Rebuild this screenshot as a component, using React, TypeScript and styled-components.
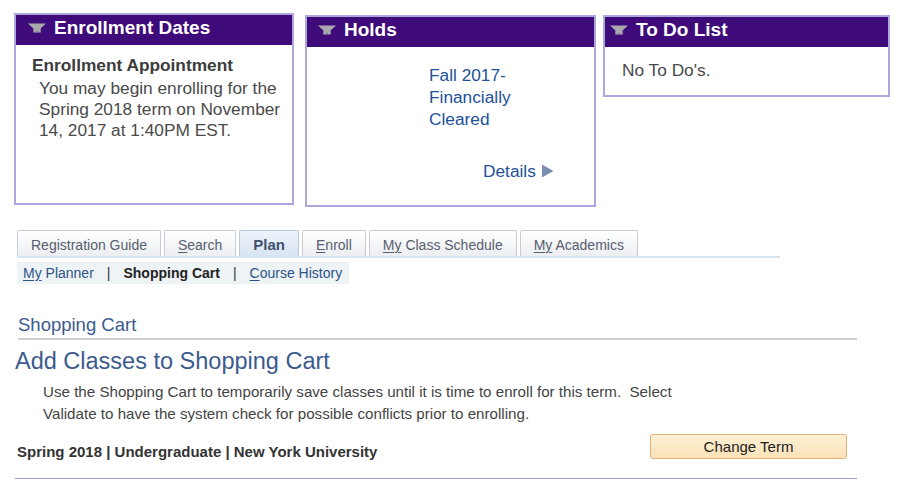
import styled, { createGlobalStyle } from 'styled-components';

const GlobalStyle = createGlobalStyle`
  body {
    margin: 0;
    background: #ffffff;
    font-family: "Liberation Sans", Arial, Helvetica, sans-serif;
  }
`;

const FunnelIcon = () => (
  <svg width='18' height='10' viewBox='0 0 18 10'>
    <path d='M0 0.5 H18 L12.6 5.6 L12.8 9.5 H5.2 L5.4 5.6 Z' fill='#a9a9ad' />
    <path d='M7.2 9.5 L9 7.6 L10.8 9.5 Z' fill='#7d6aa0' />
  </svg>
);

const tabs = [
  { label: 'Registration Guide', key: '', rest: 'Registration Guide' },
  { label: 'Search', key: 'S', rest: 'earch' },
  { label: 'Plan', key: '', rest: 'Plan', active: true },
  { label: 'Enroll', key: 'E', rest: 'nroll' },
  { label: 'My Class Schedule', key: 'My', rest: ' Class Schedule' },
  { label: 'My Academics', key: 'My', rest: ' Academics' },
];

const App = () => {
  return (
    <Page>
      <GlobalStyle />
      <TopRow>
        <Panel $top={13} $w={280} $h={192} $ml={0}>
          <PanelHeader $inset={12}>
            <FunnelIcon />
            <HeaderTitle>Enrollment Dates</HeaderTitle>
          </PanelHeader>
          <AppointmentBody>
            <BodyHeading>Enrollment Appointment</BodyHeading>
            <BodyText>
              You may begin enrolling for the Spring 2018 term on November 14,
              2017 at 1:40PM EST.
            </BodyText>
          </AppointmentBody>
        </Panel>

        <Panel $top={15} $w={291} $h={192} $ml={11}>
          <PanelHeader $inset={11}>
            <FunnelIcon />
            <HeaderTitle>Holds</HeaderTitle>
          </PanelHeader>
          <HoldsBody>
            <HoldLink>
              Fall 2017-
              <br />
              Financially
              <br />
              Cleared
            </HoldLink>
            <DetailsLink>
              Details
              <svg width='13' height='14' viewBox='0 0 13 14'>
                <path d='M1 0.5 L12.5 7 L1 13.5 Z' fill='#7b8fb3' />
              </svg>
            </DetailsLink>
          </HoldsBody>
        </Panel>

        <Panel $top={15} $w={287} $h={82} $ml={7}>
          <PanelHeader $inset={5}>
            <FunnelIcon />
            <HeaderTitle>To Do List</HeaderTitle>
          </PanelHeader>
          <TodoBody>No To Do's.</TodoBody>
        </Panel>
      </TopRow>

      <TabBar>
        {tabs.map((t) => (
          <Tab key={t.label} $active={!!t.active}>
            {t.key && <u>{t.key}</u>}
            {t.rest}
          </Tab>
        ))}
      </TabBar>

      <SubNav>
        <SubLink>
          <u>My</u> Planner
        </SubLink>
        <Pipe>|</Pipe>
        <SubCurrent>Shopping Cart</SubCurrent>
        <Pipe>|</Pipe>
        <SubLink>
          <u>C</u>ourse History
        </SubLink>
      </SubNav>

      <Content>
        <PageHeader>Shopping Cart</PageHeader>
        <Title>Add Classes to Shopping Cart</Title>
        <Instructions>
          Use the Shopping Cart to temporarily save classes until it is time to
          enroll for this term.&nbsp; Select
          <br />
          Validate to have the system check for possible conflicts prior to
          enrolling.
        </Instructions>
        <TermRow>
          <TermLabel>Spring 2018 | Undergraduate | New York University</TermLabel>
          <ChangeTermButton>Change Term</ChangeTermButton>
        </TermRow>
      </Content>
    </Page>
  );
};

export default App;

const Page = styled.div`
  width: 900px;
`;

const TopRow = styled.div`
  display: flex;
  align-items: flex-start;
  padding-left: 14px;
`;

const Panel = styled.section<{ $top: number; $w: number; $h: number; $ml: number }>`
  box-sizing: border-box;
  display: flex;
  flex-direction: column;
  margin-top: ${(p) => p.$top}px;
  margin-left: ${(p) => p.$ml}px;
  width: ${(p) => p.$w}px;
  height: ${(p) => p.$h}px;
  border: 2px solid #aca8dc;
  background: #ffffff;
`;

const PanelHeader = styled.div<{ $inset: number }>`
  box-sizing: border-box;
  display: flex;
  align-items: center;
  gap: 8px;
  height: 30px;
  padding: 0 0 4px ${(p) => p.$inset}px;
  background: #3f0a7a;
`;

const HeaderTitle = styled.h2`
  margin: 0;
  font-size: 19px;
  line-height: 26px;
  font-weight: 700;
  color: #ffffff;
`;

const AppointmentBody = styled.div`
  padding: 10px 8px 0 16px;
`;

const BodyHeading = styled.div`
  font-size: 17.3px;
  line-height: 21px;
  font-weight: 700;
  color: #3c3c3c;
`;

const BodyText = styled.p`
  margin: 2px 0 0 7px;
  font-size: 17.3px;
  line-height: 21px;
  color: #4a4a4a;
`;

const HoldsBody = styled.div`
  display: flex;
  flex-direction: column;
  padding: 17px 0 0 122px;
`;

const HoldLink = styled.div`
  font-size: 17.3px;
  line-height: 22px;
  color: #22529a;
`;

const DetailsLink = styled.div`
  display: flex;
  align-items: center;
  gap: 5px;
  margin: 30px 0 0 54px;
  font-size: 17.3px;
  line-height: 22px;
  color: #22529a;
`;

const TodoBody = styled.div`
  padding: 12px 0 0 17px;
  font-size: 17.3px;
  line-height: 22px;
  color: #4a4a4a;
`;

const TabBar = styled.nav`
  display: flex;
  align-items: flex-end;
  gap: 3px;
  width: 763px;
  margin: 23px 0 0 17px;
  border-bottom: 2px solid #d9e4f1;
`;

const Tab = styled.div<{ $active: boolean }>`
  box-sizing: border-box;
  height: 26px;
  padding: 3px 13px 0;
  border: 1px solid ${(p) => (p.$active ? '#b9c8dc' : '#c6ccd5')};
  border-bottom: none;
  border-radius: 2px 2px 0 0;
  background: ${(p) =>
    p.$active
      ? 'linear-gradient(#edf3fa, #d8e4f2)'
      : 'linear-gradient(#ffffff, #eceef2)'};
  font-size: ${(p) => (p.$active ? '15px' : '14px')};
  font-weight: ${(p) => (p.$active ? 700 : 400)};
  line-height: 22px;
  color: ${(p) => (p.$active ? '#415270' : '#56606f')};
  white-space: nowrap;

  u {
    text-decoration-thickness: 1px;
    text-underline-offset: 2px;
  }
`;

const SubNav = styled.div`
  display: inline-flex;
  align-items: center;
  height: 22px;
  margin: 4px 0 0 17px;
  padding: 0 7px 0 6px;
  background: #eef3f6;
  font-size: 14px;
  line-height: 22px;
`;

const SubLink = styled.span`
  color: #2c5288;

  u {
    text-underline-offset: 2px;
  }
`;

const SubCurrent = styled.span`
  color: #222222;
  font-weight: 700;
`;

const Pipe = styled.span`
  margin: 0 13px;
  color: #333333;
`;

const Content = styled.main`
  width: 842px;
  margin: 30px 0 0 15px;
`;

const PageHeader = styled.h1`
  margin: 0 0 0 3px;
  padding: 0 0 2px 0;
  border-bottom: 2px solid #d0d0d0;
  font-size: 18.5px;
  line-height: 22px;
  font-weight: 400;
  color: #3b5b8e;
`;

const Title = styled.h2`
  margin: 7px 0 0 0;
  font-size: 23.5px;
  line-height: 28px;
  font-weight: 400;
  color: #3b5b8e;
`;

const Instructions = styled.p`
  margin: 6px 0 0 28px;
  font-size: 15.15px;
  line-height: 22px;
  color: #444444;
`;

const TermRow = styled.div`
  display: flex;
  justify-content: space-between;
  align-items: flex-start;
  height: 29px;
  margin-top: 5px;
  padding: 0 10px 19px 2px;
  border-bottom: 1.5px solid #a29ddf;
`;

const TermLabel = styled.div`
  padding-top: 13px;
  font-size: 15px;
  line-height: 18px;
  font-weight: 700;
  color: #333333;
`;

const ChangeTermButton = styled.button`
  box-sizing: border-box;
  width: 197px;
  height: 25px;
  margin-top: 4px;
  border: 1px solid #e5b07a;
  border-radius: 3px;
  background: linear-gradient(#fef0d6, #fbe2b7);
  font-family: inherit;
  font-size: 15px;
  color: #222222;
`;
